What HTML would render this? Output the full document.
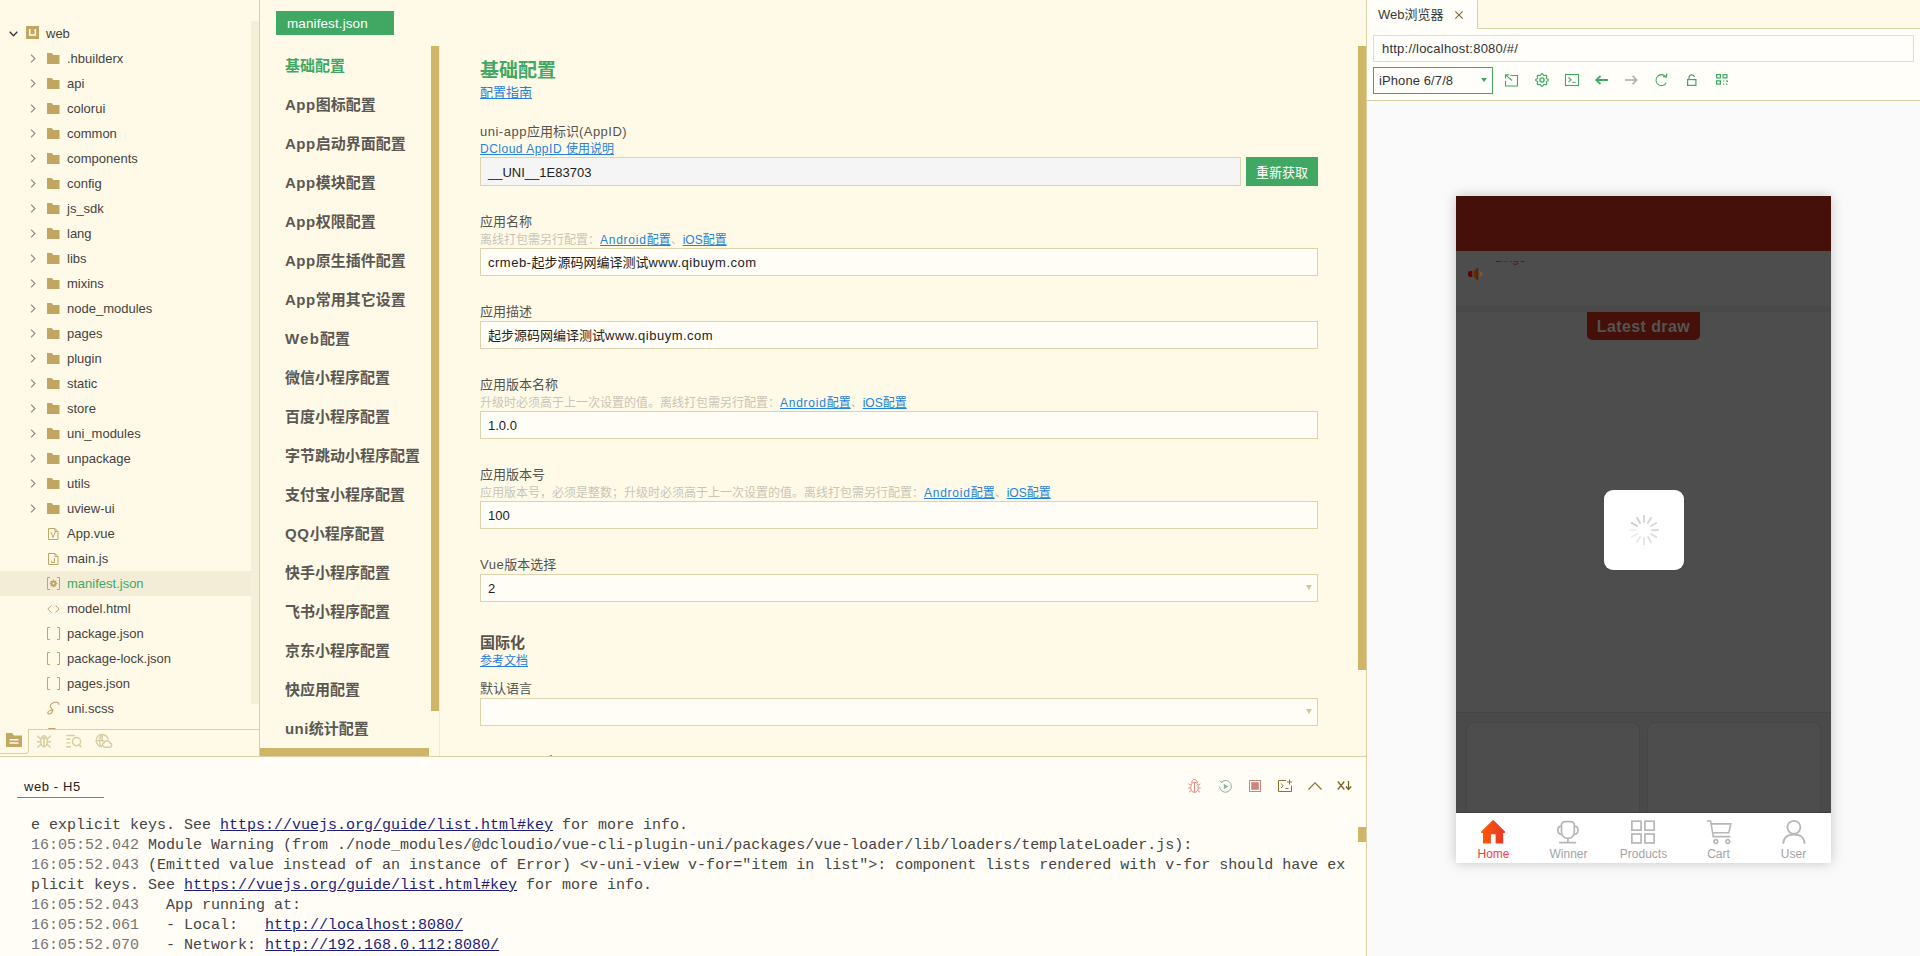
<!DOCTYPE html>
<html lang="zh-CN">
<head>
<meta charset="utf-8">
<title>HBuilder X</title>
<style>
*{box-sizing:border-box;margin:0;padding:0}
html,body{width:1920px;height:956px;overflow:hidden}
body{position:relative;background:#FFFAE8;font-family:"Liberation Sans","Noto Sans CJK SC",sans-serif;font-size:13px;color:#3f3d3a}
.abs{position:absolute}
svg{display:block;overflow:visible}
/* ---------- left tree ---------- */
#tree{left:0;top:0;width:259px;height:756px;overflow:hidden}
#treeborder{left:259px;top:0;width:1px;height:757px;background:#DCCFA2}
#treescroll{left:251px;top:21px;width:8px;height:683px;background:#F5EFD9}
.row{position:absolute;left:0;width:251px;height:25px;line-height:25px;white-space:nowrap}
.row .t{position:absolute;left:67px;top:0;font-size:13px;color:#45423e}
.row .chev{position:absolute;left:30px;top:8px}
.row .ico{position:absolute;left:47px;top:6px}
.row.sel{background:#F3ECD6}
.row.sel .t{color:#41A863}
/* ---------- editor tab + sidebar ---------- */
#edtab{left:276px;top:11px;width:118px;height:24px;background:#41A863;color:#fff;font-size:13.5px;line-height:25px;padding-left:11px;letter-spacing:.1px}
.mi{position:absolute;left:285px;height:20px;line-height:20px;font-size:15px;font-weight:bold;color:#5b5853;white-space:nowrap}
.mi.on{color:#41A863}
#sbv{left:431px;top:46px;width:8px;height:665px;background:#CFB568}
#sbl{left:439px;top:46px;width:1px;height:710px;background:#F2EBD3}
#sbh{left:260px;top:748px;width:169px;height:8px;background:#CFB568}
/* ---------- form ---------- */
.lbl{position:absolute;left:480px;font-size:13px;line-height:16px;height:16px;color:#56534e;white-space:nowrap}
.hint{position:absolute;left:480px;font-size:12px;line-height:14px;height:14px;color:#C9C5B6;white-space:nowrap}
.lnk{color:#2483D9;text-decoration:underline}
.inp{position:absolute;left:480px;width:838px;height:28px;border:1px solid #DDD3AC;background:#FFFDF6;font-size:13px;line-height:26px;padding-left:7px;padding-top:1px;color:#222;white-space:nowrap}
.l{letter-spacing:.5px}
.inp.dis{background:#F5F5F5;width:761px;height:29px;line-height:27px}
.dd{position:absolute;right:5px;top:10px;width:0;height:0;border-left:3.500px solid transparent;border-right:3.500px solid transparent;border-top:5px solid #D3C596}
.tb{position:absolute;top:617px;width:75px;height:50px}
.tb svg{position:absolute;left:25px;top:7px}
.tb span{position:absolute;left:0;width:75px;top:34px;text-align:center;font-size:12px;line-height:14px;color:#A3A3A3;font-family:"Liberation Sans",sans-serif}
.cl{position:absolute;left:31px;height:20px;line-height:20px;font-family:"Liberation Mono",monospace;font-size:15px;color:#454545;white-space:pre}.cl i{font-style:normal;color:#757575}.cl u{color:#1d1d78}
</style>
</head>
<body>
<div id="tree" class="abs">
<div class="row" style="top:21px"><svg class="chev" style="left:9px;top:10px" width="9" height="6" viewBox="0 0 9 6"><path d="M.7 .8L4.5 4.8 8.3 .8" fill="none" stroke="#3a3a3a" stroke-width="1.4"/></svg><svg class="ico" style="left:26px;top:5px" width="13" height="13" viewBox="0 0 13 13"><rect width="13" height="13" fill="#C0A661"/><path d="M3.7 3v6h5.600V3" fill="none" stroke="#FFFAE8" stroke-width="1.6"/></svg><span class="t" style="left:46px">web</span></div>
<div class="row" style="top:46px"><svg class="chev" width="6" height="9" viewBox="0 0 6 9"><path d="M1 .7 L4.9 4.5 L1 8.3" fill="none" stroke="#92896f" stroke-width="1.150"/></svg><svg class="ico" width="12.500" height="12" viewBox="0 0 13 12" preserveAspectRatio="none"><path d="M0 1h5l1.5 2H13v9H0z" fill="#C0A661"/></svg><span class="t">.hbuilderx</span></div>
<div class="row" style="top:71px"><svg class="chev" width="6" height="9" viewBox="0 0 6 9"><path d="M1 .7 L4.9 4.5 L1 8.3" fill="none" stroke="#92896f" stroke-width="1.150"/></svg><svg class="ico" width="12.500" height="12" viewBox="0 0 13 12" preserveAspectRatio="none"><path d="M0 1h5l1.5 2H13v9H0z" fill="#C0A661"/></svg><span class="t">api</span></div>
<div class="row" style="top:96px"><svg class="chev" width="6" height="9" viewBox="0 0 6 9"><path d="M1 .7 L4.9 4.5 L1 8.3" fill="none" stroke="#92896f" stroke-width="1.150"/></svg><svg class="ico" width="12.500" height="12" viewBox="0 0 13 12" preserveAspectRatio="none"><path d="M0 1h5l1.5 2H13v9H0z" fill="#C0A661"/></svg><span class="t">colorui</span></div>
<div class="row" style="top:121px"><svg class="chev" width="6" height="9" viewBox="0 0 6 9"><path d="M1 .7 L4.9 4.5 L1 8.3" fill="none" stroke="#92896f" stroke-width="1.150"/></svg><svg class="ico" width="12.500" height="12" viewBox="0 0 13 12" preserveAspectRatio="none"><path d="M0 1h5l1.5 2H13v9H0z" fill="#C0A661"/></svg><span class="t">common</span></div>
<div class="row" style="top:146px"><svg class="chev" width="6" height="9" viewBox="0 0 6 9"><path d="M1 .7 L4.9 4.5 L1 8.3" fill="none" stroke="#92896f" stroke-width="1.150"/></svg><svg class="ico" width="12.500" height="12" viewBox="0 0 13 12" preserveAspectRatio="none"><path d="M0 1h5l1.5 2H13v9H0z" fill="#C0A661"/></svg><span class="t">components</span></div>
<div class="row" style="top:171px"><svg class="chev" width="6" height="9" viewBox="0 0 6 9"><path d="M1 .7 L4.9 4.5 L1 8.3" fill="none" stroke="#92896f" stroke-width="1.150"/></svg><svg class="ico" width="12.500" height="12" viewBox="0 0 13 12" preserveAspectRatio="none"><path d="M0 1h5l1.5 2H13v9H0z" fill="#C0A661"/></svg><span class="t">config</span></div>
<div class="row" style="top:196px"><svg class="chev" width="6" height="9" viewBox="0 0 6 9"><path d="M1 .7 L4.9 4.5 L1 8.3" fill="none" stroke="#92896f" stroke-width="1.150"/></svg><svg class="ico" width="12.500" height="12" viewBox="0 0 13 12" preserveAspectRatio="none"><path d="M0 1h5l1.5 2H13v9H0z" fill="#C0A661"/></svg><span class="t">js_sdk</span></div>
<div class="row" style="top:221px"><svg class="chev" width="6" height="9" viewBox="0 0 6 9"><path d="M1 .7 L4.9 4.5 L1 8.3" fill="none" stroke="#92896f" stroke-width="1.150"/></svg><svg class="ico" width="12.500" height="12" viewBox="0 0 13 12" preserveAspectRatio="none"><path d="M0 1h5l1.5 2H13v9H0z" fill="#C0A661"/></svg><span class="t">lang</span></div>
<div class="row" style="top:246px"><svg class="chev" width="6" height="9" viewBox="0 0 6 9"><path d="M1 .7 L4.9 4.5 L1 8.3" fill="none" stroke="#92896f" stroke-width="1.150"/></svg><svg class="ico" width="12.500" height="12" viewBox="0 0 13 12" preserveAspectRatio="none"><path d="M0 1h5l1.5 2H13v9H0z" fill="#C0A661"/></svg><span class="t">libs</span></div>
<div class="row" style="top:271px"><svg class="chev" width="6" height="9" viewBox="0 0 6 9"><path d="M1 .7 L4.9 4.5 L1 8.3" fill="none" stroke="#92896f" stroke-width="1.150"/></svg><svg class="ico" width="12.500" height="12" viewBox="0 0 13 12" preserveAspectRatio="none"><path d="M0 1h5l1.5 2H13v9H0z" fill="#C0A661"/></svg><span class="t">mixins</span></div>
<div class="row" style="top:296px"><svg class="chev" width="6" height="9" viewBox="0 0 6 9"><path d="M1 .7 L4.9 4.5 L1 8.3" fill="none" stroke="#92896f" stroke-width="1.150"/></svg><svg class="ico" width="12.500" height="12" viewBox="0 0 13 12" preserveAspectRatio="none"><path d="M0 1h5l1.5 2H13v9H0z" fill="#C0A661"/></svg><span class="t">node_modules</span></div>
<div class="row" style="top:321px"><svg class="chev" width="6" height="9" viewBox="0 0 6 9"><path d="M1 .7 L4.9 4.5 L1 8.3" fill="none" stroke="#92896f" stroke-width="1.150"/></svg><svg class="ico" width="12.500" height="12" viewBox="0 0 13 12" preserveAspectRatio="none"><path d="M0 1h5l1.5 2H13v9H0z" fill="#C0A661"/></svg><span class="t">pages</span></div>
<div class="row" style="top:346px"><svg class="chev" width="6" height="9" viewBox="0 0 6 9"><path d="M1 .7 L4.9 4.5 L1 8.3" fill="none" stroke="#92896f" stroke-width="1.150"/></svg><svg class="ico" width="12.500" height="12" viewBox="0 0 13 12" preserveAspectRatio="none"><path d="M0 1h5l1.5 2H13v9H0z" fill="#C0A661"/></svg><span class="t">plugin</span></div>
<div class="row" style="top:371px"><svg class="chev" width="6" height="9" viewBox="0 0 6 9"><path d="M1 .7 L4.9 4.5 L1 8.3" fill="none" stroke="#92896f" stroke-width="1.150"/></svg><svg class="ico" width="12.500" height="12" viewBox="0 0 13 12" preserveAspectRatio="none"><path d="M0 1h5l1.5 2H13v9H0z" fill="#C0A661"/></svg><span class="t">static</span></div>
<div class="row" style="top:396px"><svg class="chev" width="6" height="9" viewBox="0 0 6 9"><path d="M1 .7 L4.9 4.5 L1 8.3" fill="none" stroke="#92896f" stroke-width="1.150"/></svg><svg class="ico" width="12.500" height="12" viewBox="0 0 13 12" preserveAspectRatio="none"><path d="M0 1h5l1.5 2H13v9H0z" fill="#C0A661"/></svg><span class="t">store</span></div>
<div class="row" style="top:421px"><svg class="chev" width="6" height="9" viewBox="0 0 6 9"><path d="M1 .7 L4.9 4.5 L1 8.3" fill="none" stroke="#92896f" stroke-width="1.150"/></svg><svg class="ico" width="12.500" height="12" viewBox="0 0 13 12" preserveAspectRatio="none"><path d="M0 1h5l1.5 2H13v9H0z" fill="#C0A661"/></svg><span class="t">uni_modules</span></div>
<div class="row" style="top:446px"><svg class="chev" width="6" height="9" viewBox="0 0 6 9"><path d="M1 .7 L4.9 4.5 L1 8.3" fill="none" stroke="#92896f" stroke-width="1.150"/></svg><svg class="ico" width="12.500" height="12" viewBox="0 0 13 12" preserveAspectRatio="none"><path d="M0 1h5l1.5 2H13v9H0z" fill="#C0A661"/></svg><span class="t">unpackage</span></div>
<div class="row" style="top:471px"><svg class="chev" width="6" height="9" viewBox="0 0 6 9"><path d="M1 .7 L4.9 4.5 L1 8.3" fill="none" stroke="#92896f" stroke-width="1.150"/></svg><svg class="ico" width="12.500" height="12" viewBox="0 0 13 12" preserveAspectRatio="none"><path d="M0 1h5l1.5 2H13v9H0z" fill="#C0A661"/></svg><span class="t">utils</span></div>
<div class="row" style="top:496px"><svg class="chev" width="6" height="9" viewBox="0 0 6 9"><path d="M1 .7 L4.9 4.5 L1 8.3" fill="none" stroke="#92896f" stroke-width="1.150"/></svg><svg class="ico" width="12.500" height="12" viewBox="0 0 13 12" preserveAspectRatio="none"><path d="M0 1h5l1.5 2H13v9H0z" fill="#C0A661"/></svg><span class="t">uview-ui</span></div>
<div class="row" style="top:521px"><svg class="ico" style="left:48px;top:7px" width="11" height="12" viewBox="0 0 11 12"><path d="M.5 .5h6.500l3 3v8h-9.500z" fill="none" stroke="#C0A661" stroke-width="1"/><path d="M7 .5v3h3" fill="none" stroke="#C0A661" stroke-width="1"/><path d="M2.800 4l2.200 5.500L7.200 4" fill="none" stroke="#C0A661" stroke-width="1"/></svg><span class="t">App.vue</span></div>
<div class="row" style="top:546px"><svg class="ico" style="left:48px;top:7px" width="11" height="12" viewBox="0 0 11 12"><path d="M.5 .5h6.500l3 3v8h-9.500z" fill="none" stroke="#C0A661" stroke-width="1"/><path d="M7 .5v3h3" fill="none" stroke="#C0A661" stroke-width="1"/><path d="M6.500 5v4.500h-3v-1.500" fill="none" stroke="#C0A661" stroke-width="1"/></svg><span class="t">main.js</span></div>
<div class="row sel" style="top:571px"><svg class="ico" style="left:47px;top:6px" width="13" height="13" viewBox="0 0 13 13"><path d="M3 .5H.5v12H3M10 .5h2.500v12H10" fill="none" stroke="#C0A661" stroke-width="1"/><circle cx="6.500" cy="6.500" r="2.300" fill="none" stroke="#C0A661" stroke-width="1.600"/><path d="M6.500 2.700v7.600M2.700 6.500h7.600M3.800 3.800l5.400 5.400M9.200 3.800l-5.400 5.400" stroke="#C0A661" stroke-width="1.200"/><circle cx="6.500" cy="6.500" r="1" fill="#F3ECD6"/></svg><span class="t">manifest.json</span></div>
<div class="row" style="top:596px"><svg class="ico" style="left:47px;top:9px" width="13" height="8" viewBox="0 0 13 8"><path d="M4.500 .5L.8 4l3.700 3.500M8.500 .5L12.200 4 8.500 7.500" fill="none" stroke="#C0A661" stroke-width="1" stroke-width="1.400"/></svg><span class="t">model.html</span></div>
<div class="row" style="top:621px"><svg class="ico" style="left:47px;top:6px" width="13" height="13" viewBox="0 0 13 13"><path d="M3 .5H.5v12H3M10 .5h2.500v12H10" fill="none" stroke="#C0A661" stroke-width="1"/></svg><span class="t">package.json</span></div>
<div class="row" style="top:646px"><svg class="ico" style="left:47px;top:6px" width="13" height="13" viewBox="0 0 13 13"><path d="M3 .5H.5v12H3M10 .5h2.500v12H10" fill="none" stroke="#C0A661" stroke-width="1"/></svg><span class="t">package-lock.json</span></div>
<div class="row" style="top:671px"><svg class="ico" style="left:47px;top:6px" width="13" height="13" viewBox="0 0 13 13"><path d="M3 .5H.5v12H3M10 .5h2.500v12H10" fill="none" stroke="#C0A661" stroke-width="1"/></svg><span class="t">pages.json</span></div>
<div class="row" style="top:696px"><svg class="ico" style="top:5px" width="13" height="14.500" viewBox="0 0 12 13.400"><path d="M10.800 3.600c1-2-1.500-3.400-4.600-2.200c-3 1.200-4 3.400-2.600 4.800c1.600 1.500 2.200 2.600 1 4.300c-1.200 1.600-3.600 2-3.900 .7c-.3-1.500 2.200-3.100 5.300-2.800" fill="none" stroke="#C0A661" stroke-width="1" stroke-width="1.100"/></svg><span class="t">uni.scss</span></div>
<div class="row" style="top:721px"><svg class="ico" style="left:48px;top:7px" width="11" height="12" viewBox="0 0 11 12"><path d="M.5 .5h6.500l3 3v8h-9.500z" fill="none" stroke="#C0A661" stroke-width="1"/><path d="M7 .5v3h3" fill="none" stroke="#C0A661" stroke-width="1"/><path d="M6.500 5v4.500h-3v-1.500" fill="none" stroke="#C0A661" stroke-width="1"/></svg><span class="t">vue.config.js</span></div>
</div>
<div id="treescroll" class="abs"></div><div id="treeborder" class="abs"></div>
<div class="abs" style="left:0;top:729px;width:259px;height:27px;background:#FFFAE8"></div>
<div class="abs" style="left:28px;top:729px;width:231px;height:1px;background:#DCCFA2"></div>
<div class="abs" style="left:0;top:729px;width:29px;height:25px;border:1px solid #DCCFA2;border-top:none;border-left:none;border-radius:0 0 4px 0"></div>
<svg class="abs" style="left:6px;top:733px" width="16" height="14" viewBox="0 0 16 14"><path d="M0 0h6l2 2.500h8V14H0z" fill="#C2A863"/><path d="M3.500 6.800h9M3.500 10h9" stroke="#FFFAE8" stroke-width="1.500"/></svg>
<svg class="abs" style="left:36px;top:733px" width="16" height="16" viewBox="0 0 16 16" fill="none" stroke="#D9CC9F" stroke-width="1.400"><ellipse cx="8" cy="8.300" rx="3.200" ry="5.600"/><path d="M8 4.500V13.800" stroke-width="1.600"/><path d="M5.900 5h4.200"/><path d="M4.900 6.200L1.200 2.800M4.800 8.800H.9M5.100 11.300L1.400 14.600M11.100 6.200L14.800 2.800M11.200 8.800H15.100M10.900 11.300L14.600 14.600"/></svg>
<svg class="abs" style="left:66px;top:733px" width="16" height="16" viewBox="0 0 16 16" fill="none" stroke="#D9CC9F" stroke-width="1.400"><path d="M.3 2.500H8.800M.3 6.200H4.400M.3 9.900H4.400M.3 13.700H5"/><circle cx="10.500" cy="8.600" r="4.100"/><path d="M13.400 11.700L15.400 14.300"/></svg>
<svg class="abs" style="left:95px;top:733px" width="17" height="16" viewBox="0 0 17 16" fill="none" stroke="#D9CC9F" stroke-width="1.400"><path d="M13.200 6.400A6.100 6.100 0 1 0 6.800 13.700"/><path d="M7.200 1.500V9M1.100 7.600H9.200M7.200 1.500C3.800 4 3.800 11 6.600 13.600"/><path d="M9.700 14.200h4.800a2.100 2.100 0 0 0 .3-4.200a2.900 2.900 0 0 0-5.500-.5a2.400 2.400 0 0 0 .4 4.700z"/></svg>
<div id="edtab" class="abs">manifest.json</div>
<div class="mi on" style="top:56px">基础配置</div>
<div class="mi" style="top:95px"><span style="letter-spacing:0.5px">App</span>图标配置</div>
<div class="mi" style="top:134px"><span style="letter-spacing:0.5px">App</span>启动界面配置</div>
<div class="mi" style="top:173px"><span style="letter-spacing:0.5px">App</span>模块配置</div>
<div class="mi" style="top:212px"><span style="letter-spacing:0.5px">App</span>权限配置</div>
<div class="mi" style="top:251px"><span style="letter-spacing:0.5px">App</span>原生插件配置</div>
<div class="mi" style="top:290px"><span style="letter-spacing:0.5px">App</span>常用其它设置</div>
<div class="mi" style="top:329px"><span style="letter-spacing:1.2px">Web</span>配置</div>
<div class="mi" style="top:368px">微信小程序配置</div>
<div class="mi" style="top:407px">百度小程序配置</div>
<div class="mi" style="top:446px">字节跳动小程序配置</div>
<div class="mi" style="top:485px">支付宝小程序配置</div>
<div class="mi" style="top:524px"><span style="letter-spacing:0.7px">QQ</span>小程序配置</div>
<div class="mi" style="top:563px">快手小程序配置</div>
<div class="mi" style="top:602px">飞书小程序配置</div>
<div class="mi" style="top:641px">京东小程序配置</div>
<div class="mi" style="top:680px">快应用配置</div>
<div class="mi" style="top:719px"><span style="letter-spacing:0.4px">uni</span>统计配置</div>
<div id="sbl" class="abs"></div><div id="sbv" class="abs"></div><div id="sbh" class="abs"></div>
<div class="abs" style="left:480px;top:59px;font-size:19px;line-height:24px;font-weight:bold;color:#41A863;white-space:nowrap">基础配置</div>
<div class="abs lnk" style="left:480px;top:85px;font-size:13px;line-height:16px;white-space:nowrap">配置指南</div>
<div class="lbl" style="top:124px"><span class=l>uni-app</span>应用标识<span class=l>(AppID)</span></div>
<div class="hint lnk" style="top:142px;color:#2483D9"><span class=l>DCloud AppID </span>使用说明</div>
<div class="inp dis" style="top:157px">__UNI__1E83703</div>
<div class="abs" style="left:1246px;top:157px;width:72px;height:29px;background:#41A863;color:#fff;font-size:13px;line-height:31px;text-align:center;overflow:hidden">重新获取</div>
<div class="lbl" style="top:214px">应用名称</div>
<div class="hint" style="top:233px">离线打包需另行配置：<span class="lnk"><b style="font-weight:normal;letter-spacing:.75px">Android</b>配置</span>、<span class="lnk">iOS配置</span></div>
<div class="inp" style="top:248px"><span class=l>crmeb-</span>起步源码网编译测试<span class=l>www.qibuym.com</span></div>
<div class="lbl" style="top:304px">应用描述</div>
<div class="inp" style="top:321px">起步源码网编译测试<span class=l>www.qibuym.com</span></div>
<div class="lbl" style="top:377px">应用版本名称</div>
<div class="hint" style="top:396px">升级时必须高于上一次设置的值。离线打包需另行配置：<span class="lnk"><b style="font-weight:normal;letter-spacing:.75px">Android</b>配置</span>、<span class="lnk">iOS配置</span></div>
<div class="inp" style="top:411px">1.0.0</div>
<div class="lbl" style="top:467px">应用版本号</div>
<div class="hint" style="top:486px">应用版本号，必须是整数；升级时必须高于上一次设置的值。离线打包需另行配置：<span class="lnk"><b style="font-weight:normal;letter-spacing:.75px">Android</b>配置</span>、<span class="lnk">iOS配置</span></div>
<div class="inp" style="top:501px">100</div>
<div class="lbl" style="top:557px"><span class=l>Vue</span>版本选择</div>
<div class="inp" style="top:574px">2<i class="dd"></i></div>
<div class="abs" style="left:480px;top:634px;font-size:15px;line-height:18px;font-weight:bold;color:#5a5249;white-space:nowrap">国际化</div>
<div class="abs lnk" style="left:480px;top:654px;font-size:12px;line-height:14px;white-space:nowrap">参考文档</div>
<div class="lbl" style="top:681px">默认语言</div>
<div class="inp" style="top:698px"><i class="dd"></i></div>
<div class="abs" style="left:550px;top:755px;width:2px;height:1px;background:#8a8679"></div>
<div class="abs" style="left:1358px;top:46px;width:8px;height:624px;background:#CFB568"></div>
<div class="abs" style="left:1366px;top:0;width:1px;height:956px;background:#DCCFA2"></div>
<div class="abs" style="left:1367px;top:0;width:553px;height:101px;background:#FFFEF9"></div>
<div class="abs" style="left:1367px;top:101px;width:553px;height:855px;background:#FAFAFA"></div>
<div class="abs" style="left:1367px;top:100px;width:553px;height:1px;background:#DACFA6"></div>
<!-- tab strip -->
<div class="abs" style="left:1477px;top:0;width:443px;height:29px;background:#FFFAE8;border-left:1px solid #DCCFA2;border-bottom:1px solid #DCCFA2"></div>
<div class="abs" style="left:1378px;top:6px;font-size:13px;line-height:18px;color:#3a3a3a;white-space:nowrap">Web浏览器</div>
<svg class="abs" style="left:1455px;top:11px" width="8" height="8" viewBox="0 0 8 8"><path d="M.3 .3l7.400 7.400M7.700 .3L.3 7.700" stroke="#7d6a33" stroke-width="1.100"/></svg>
<!-- url -->
<div class="abs" style="left:1373px;top:35px;width:541px;height:27px;border:1px solid #DDDDDD;background:#FFFEFA;font-size:13px;line-height:25px;padding-left:8px;color:#333;letter-spacing:.22px;white-space:nowrap">http://localhost:8080/#/</div>
<!-- device select -->
<div class="abs" style="left:1373px;top:67px;width:120px;height:27px;border:1px solid #41A863;background:#FFFEFA;font-size:13px;line-height:25px;padding-left:5px;color:#333;letter-spacing:.1px;white-space:nowrap">iPhone 6/7/8</div>
<div class="abs" style="left:1481px;top:78px;width:0;height:0;border-left:3px solid transparent;border-right:3px solid transparent;border-top:4px solid #41A863"></div>
<!-- toolbar icons -->
<svg class="abs" style="left:1504px;top:73px" width="14" height="14" viewBox="0 0 14 14" fill="none" stroke="#41A863" stroke-width="1.100"><path d="M6.500 2.500h7v10.500H1.500V8"/><path d="M1.500 1.800l6.500 5.700M1.500 5.500V1.800h4"/></svg>
<svg class="abs" style="left:1534.500px;top:73px" width="14" height="14" viewBox="0 0 14 14" fill="none" stroke="#41A863" stroke-width="1.200"><path d="M7.00 0.70 L7.41 0.81 L7.77 1.13 L8.08 1.56 L8.34 2.00 L8.58 2.36 L8.84 2.57 L9.17 2.60 L9.59 2.52 L10.08 2.39 L10.61 2.30 L11.09 2.34 L11.45 2.55 L11.66 2.91 L11.70 3.39 L11.61 3.92 L11.48 4.41 L11.40 4.83 L11.43 5.16 L11.64 5.42 L12.00 5.66 L12.44 5.92 L12.87 6.23 L13.19 6.59 L13.30 7.00 L13.19 7.41 L12.87 7.77 L12.44 8.08 L12.00 8.34 L11.64 8.58 L11.43 8.84 L11.40 9.17 L11.48 9.59 L11.61 10.08 L11.70 10.61 L11.66 11.09 L11.45 11.45 L11.09 11.66 L10.61 11.70 L10.08 11.61 L9.59 11.48 L9.17 11.40 L8.84 11.43 L8.58 11.64 L8.34 12.00 L8.08 12.44 L7.77 12.87 L7.41 13.19 L7.00 13.30 L6.59 13.19 L6.23 12.87 L5.92 12.44 L5.66 12.00 L5.42 11.64 L5.16 11.43 L4.83 11.40 L4.41 11.48 L3.92 11.61 L3.39 11.70 L2.91 11.66 L2.55 11.45 L2.34 11.09 L2.30 10.61 L2.39 10.08 L2.52 9.59 L2.60 9.17 L2.57 8.84 L2.36 8.58 L2.00 8.34 L1.56 8.08 L1.13 7.77 L0.81 7.41 L0.70 7.00 L0.81 6.59 L1.13 6.23 L1.56 5.92 L2.00 5.66 L2.36 5.42 L2.57 5.16 L2.60 4.83 L2.52 4.41 L2.39 3.92 L2.30 3.39 L2.34 2.91 L2.55 2.55 L2.91 2.34 L3.39 2.30 L3.92 2.39 L4.41 2.52 L4.83 2.60 L5.16 2.57 L5.42 2.36 L5.66 2.00 L5.92 1.56 L6.23 1.13 L6.59 0.81z" stroke-linejoin="round"/><circle cx="7" cy="7" r="2.100" stroke-width="1.300"/></svg>
<svg class="abs" style="left:1565px;top:74px" width="14" height="12" viewBox="0 0 14 12" fill="none" stroke="#41A863" stroke-width="1.100"><rect x=".5" y=".5" width="13" height="11"/><path d="M3.500 3.500l2.500 2.300-2.500 2.300M7.500 8.500h3"/></svg>
<svg class="abs" style="left:1595px;top:75px" width="13" height="10" viewBox="0 0 13 10" fill="none" stroke="#41A863" stroke-width="1.900"><path d="M13 5H1.500M5.500 .8L1.300 5l4.200 4.200"/></svg>
<svg class="abs" style="left:1625px;top:75px" width="13" height="10" viewBox="0 0 13 10" fill="none" stroke="#ABABAB" stroke-width="1.500"><path d="M0 5h11.500M7.500 .8L11.700 5 7.500 9.200"/></svg>
<svg class="abs" style="left:1655px;top:73px" width="13" height="14" viewBox="0 0 13 14" fill="none" stroke="#41A863" stroke-width="1.100"><path d="M11.300 9.800A5.500 5.500 0 1 1 10.500 3.300"/><path d="M8.200 3.600l3.200.4.300-3.200" stroke-width="1.300"/></svg>
<svg class="abs" style="left:1687px;top:74px" width="10" height="12" viewBox="0 0 10 12" fill="none" stroke="#41A863" stroke-width="1.200"><rect x=".6" y="5.600" width="8.300" height="5.800"/><path d="M2 5.500V3.500a2.800 2.800 0 0 1 5.500-.6"/></svg>
<svg class="abs" style="left:1716px;top:74px" width="12" height="11" viewBox="0 0 12 11" fill="none" stroke="#41A863" stroke-width="1.200"><rect x=".6" y=".6" width="3.800" height="3.300"/><rect x="7.100" y=".6" width="3.800" height="3.300"/><rect x=".6" y="6.800" width="3.800" height="3.300"/><path d="M7 7h1.300M10 7h1.400v1M11.400 10.200H10M7 10.200h1.300"/></svg>
<div id="phone" class="abs" style="left:1456px;top:196px;width:375px;height:667px;background:#4D4D4D;box-shadow:0 0 12px rgba(0,0,0,.22);overflow:hidden">
<div class="abs" style="left:0;top:0;width:375px;height:55px;background:#450F0A"></div>
<div class="abs" style="left:0;top:110px;width:375px;height:6px;background:#494949"></div>
<div class="abs" style="left:39px;top:65px;width:30px;height:4px;overflow:hidden"><div style="font-size:12px;line-height:12px;margin-top:-9px;color:#531424;white-space:nowrap;font-family:'Liberation Sans',sans-serif">Bingo</div></div>
<svg class="abs" style="left:11.500px;top:70.500px" width="15" height="14" viewBox="0 0 15 14"><defs><linearGradient id="sg" x1="0" y1="0" x2="1" y2="0"><stop offset="0" stop-color="#7E2A00"/><stop offset="1" stop-color="#4E2400"/></linearGradient></defs><path d="M4.200 4H2.600a2.600 3 0 0 0 0 6H4.200z" fill="#5E0101"/><path d="M5.200 4.200L10.200 .2v13.600L5.200 9.800z" fill="url(#sg)"/><path d="M11.500 4.300l2.700 2.700-2.700 2.700" fill="none" stroke="#9C5C1E" stroke-width="1.100"/></svg>
<div class="abs" style="left:131px;top:116px;width:113px;height:28px;background:#46100A;border-radius:0 0 5px 5px;color:#545454;font-weight:bold;font-size:16px;line-height:29px;text-align:center;white-space:nowrap;letter-spacing:.4px;font-family:'Liberation Sans',sans-serif">Latest draw</div>
<!-- loading -->
<div class="abs" style="left:148px;top:294px;width:80px;height:80px;background:#fff;border-radius:9px"></div>
<svg class="abs" style="left:173px;top:319px" width="30" height="30" viewBox="-15 -15 30 30" stroke-width="1.900" stroke-linecap="round" fill="none"><path d="M0 -14.200V-8" stroke="#C9CBCF" transform="rotate(300)"/><path d="M0 -14.200V-8" stroke="#CDCFD3" transform="rotate(330)"/><path d="M0 -14.200V-8" stroke="#D2D4D7" transform="rotate(0)"/><path d="M0 -14.200V-8" stroke="#D5D7DA" transform="rotate(30)"/><path d="M0 -14.200V-8" stroke="#D8DADD" transform="rotate(60)"/><path d="M0 -14.200V-8" stroke="#DBDCDF" transform="rotate(90)"/><path d="M0 -14.200V-8" stroke="#DEDFE2" transform="rotate(120)"/><path d="M0 -14.200V-8" stroke="#E1E2E4" transform="rotate(150)"/><path d="M0 -14.200V-8" stroke="#E4E5E7" transform="rotate(180)"/><path d="M0 -14.200V-8" stroke="#E8E9EA" transform="rotate(210)"/><path d="M0 -14.200V-8" stroke="#ECECEE" transform="rotate(240)"/><path d="M0 -14.200V-8" stroke="#F1F1F2" transform="rotate(270)"/></svg>
<!-- lower list -->
<div class="abs" style="left:0;top:516px;width:375px;height:101px;background:#4A4A4A;border-top:1px solid #454545"></div>
<div class="abs" style="left:10px;top:526px;width:174px;height:110px;background:#4D4D4D;border:1px solid #464646;border-radius:8px"></div>
<div class="abs" style="left:191px;top:526px;width:174px;height:110px;background:#4D4D4D;border:1px solid #464646;border-radius:8px"></div>
<!-- tabbar -->
<div class="abs" style="left:0;top:616px;width:375px;height:1px;background:#404040"></div><div class="abs" style="left:0;top:617px;width:375px;height:50px;background:#fff"></div>
<div class="tb" style="left:0"><svg width="25" height="24" viewBox="0 0 25 24"><defs><linearGradient id="hg" x1="0" y1="0" x2="1" y2="0"><stop offset="0" stop-color="#FF5A00"/><stop offset="1" stop-color="#E8352B"/></linearGradient></defs><path d="M11.500 .4a1 1 0 0 1 1.400 0L23.700 11.200a1.100 1.100 0 0 1-.8 1.900H22.200V23.600H14.600V14.300H9.900v9.300H2V13.100H1.300a1.100 1.100 0 0 1-.8-1.900z" fill="url(#hg)"/></svg><span style="color:#F73D3D">Home</span></div>
<div class="tb" style="left:75px"><svg width="25" height="24" viewBox="0 0 25 24" fill="none" stroke="#B7B7B7" stroke-width="1.700"><path d="M8.500 1.700h6.800a3 3 0 0 1 3 3V12a6.400 6.400 0 0 1-12.800 0V4.700a3 3 0 0 1 3-3z"/><path d="M5.500 5.900a4.300 4.300 0 0 0 0 8.500M18.300 5.900a4.300 4.300 0 0 1 0 8.500M11.900 18.400v4.300M3.100 22.700h17.100"/></svg><span>Winner</span></div>
<div class="tb" style="left:150px"><svg width="25" height="24" viewBox="0 0 25 24" fill="none" stroke="#B7B7B7" stroke-width="1.700"><rect x=".85" y="1.200" width="9.200" height="8.900"/><rect x="13.900" y="1.200" width="9.200" height="8.900"/><rect x=".85" y="14.050" width="9.200" height="8.900"/><rect x="13.900" y="14.050" width="9.200" height="8.900"/></svg><span>Products</span></div>
<div class="tb" style="left:225px"><svg width="25" height="24" viewBox="0 0 25 24" fill="none" stroke="#B7B7B7" stroke-width="1.600"><path d="M1 1h3.600L7.300 16.600H24.400M5.300 3.900H24.800L22.800 12.700H6.700"/><circle cx="9.900" cy="21.500" r="1.900"/><circle cx="21.800" cy="21.500" r="1.900"/></svg><span>Cart</span></div>
<div class="tb" style="left:300px"><svg width="25" height="24" viewBox="0 0 25 24" fill="none" stroke="#B7B7B7" stroke-width="1.800"><circle cx="12.900" cy="7.300" r="6.500"/><path d="M2.200 23.800c0-5.700 4-9.300 10.700-9.300s10.700 3.600 10.700 9.300"/></svg><span>User</span></div>

</div>


<div class="abs" style="left:0;top:756px;width:1366px;height:1px;background:#DCCFA2"></div>
<div class="abs" style="left:0;top:757px;width:1366px;height:199px;background:#FFFDF6"></div>
<div class="abs" style="left:24px;top:778px;font-size:13px;line-height:18px;color:#222;white-space:nowrap;letter-spacing:.6px">web - H5</div>
<div class="abs" style="left:17px;top:797px;width:87px;height:1px;background:#41A863"></div>
<svg class="abs" style="left:1188px;top:779px" width="13" height="14" viewBox="0 0 13 14" fill="none" stroke="#E58A80" stroke-width="1"><path d="M6.500 3.300c2.500 0 3.700 2.200 3.700 5.400S8.700 13.300 6.500 13.300S2.800 11.900 2.800 8.700S4 3.300 6.500 3.300zM6.500 3.300v10M3.700 4.300c-.3-5 5.900-5 5.600 0M2.900 6.300L.6 4.800M2.800 9H.3M3.300 11.500L1 13.200M10.100 6.300l2.300-1.500M10.200 9h2.500M9.700 11.500l2.300 1.700"/></svg>
<svg class="abs" style="left:1219px;top:779.500px" width="13" height="13" viewBox="0 0 13 13"><path d="M2.300 2.200A5.900 5.900 0 1 1 .6 6.500" fill="none" stroke="#8FB5A5" stroke-width="1"/><path d="M.7 .6l1.500 1.900L4.500 1.600" fill="none" stroke="#8FB5A5" stroke-width="1"/><path d="M4.800 3.700l4.700 2.800L4.800 9.300z" fill="#8FB5A5"/></svg>
<svg class="abs" style="left:1249px;top:780px" width="12" height="12" viewBox="0 0 12 12"><rect x=".5" y=".5" width="11" height="11" fill="none" stroke="#CB857E" stroke-width="1"/><rect x="2.200" y="2.200" width="7.600" height="7.600" fill="#CB857E"/></svg>
<svg class="abs" style="left:1278px;top:779px" width="14" height="13" viewBox="0 0 14 13" fill="none" stroke="#8B7536" stroke-width="1"><path d="M8 1.500H.5v11h13V6.500M3 4.500l2.200 2.300L3 9M7.500 9.500h3M11.500 .5v5M9 3h5"/></svg>
<svg class="abs" style="left:1308px;top:782px" width="14" height="8" viewBox="0 0 14 8" fill="none" stroke="#8B7536" stroke-width="1.200"><path d="M.5 7.500L7 .8l6.500 6.700"/></svg>
<svg class="abs" style="left:1337px;top:781px" width="15" height="9" viewBox="0 0 15 9" fill="none" stroke="#7A6528" stroke-width="1.300"><path d="M.8 .5l6.500 8M7.300 .5L.8 8.500M11.500 0v8M8.800 5.500l2.700 3 2.700-3"/></svg>
<div class="cl" style="top:816px">e explicit keys. See <u>https://vuejs.org/guide/list.html#key</u> for more info.</div>
<div class="cl" style="top:836px"><i>16:05:52.042</i> Module Warning (from ./node_modules/@dcloudio/vue-cli-plugin-uni/packages/vue-loader/lib/loaders/templateLoader.js):</div>
<div class="cl" style="top:856px"><i>16:05:52.043</i> (Emitted value instead of an instance of Error) &lt;v-uni-view v-for="item in list"&gt;: component lists rendered with v-for should have ex</div>
<div class="cl" style="top:876px">plicit keys. See <u>https://vuejs.org/guide/list.html#key</u> for more info.</div>
<div class="cl" style="top:896px"><i>16:05:52.043</i>   App running at:</div>
<div class="cl" style="top:916px"><i>16:05:52.061</i>   - Local:   <u>http://localhost:8080/</u></div>
<div class="cl" style="top:936px"><i>16:05:52.070</i>   - Network: <u>http://192.168.0.112:8080/</u></div>
<div class="abs" style="left:1358px;top:827px;width:8px;height:15px;background:#CFB568"></div>
</body>
</html>
